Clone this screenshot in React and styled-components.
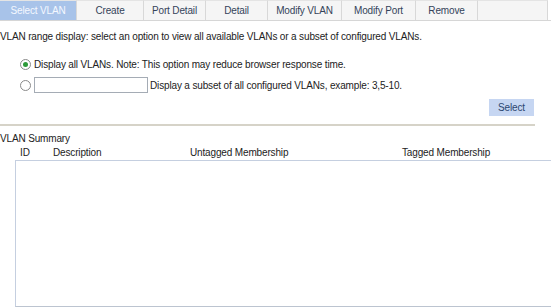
import React from 'react'
import styled, { createGlobalStyle } from 'styled-components';

const GlobalStyle = createGlobalStyle`
  html, body { margin: 0; padding: 0; background: #fff; }
  body {
    font-family: "Liberation Sans", Arial, sans-serif;
    font-size: 10px;
    letter-spacing: -0.15px;
    color: #333;
  }
`;

const tabs = [
  { label: 'Select VLAN', w: 77, active: true },
  { label: 'Create', w: 67 },
  { label: 'Port Detail', w: 62 },
  { label: 'Detail', w: 62 },
  { label: 'Modify VLAN', w: 74 },
  { label: 'Modify Port', w: 74 },
  { label: 'Remove', w: 62 },
  { label: '', w: 70 },
];

const App = () => {
  return (
    <Page>
      <GlobalStyle />
      <TabBar>
        {tabs.map((t, i) => (
          <Tab key={i} $w={t.w} $active={t.active}>{t.label}</Tab>
        ))}
      </TabBar>
      <Intro>VLAN range display: select an option to view all available VLANs or a subset of configured VLANs.</Intro>
      <Options>
        <OptionRow>
          <Radio $checked />
          <span>Display all VLANs. Note: This option may reduce browser response time.</span>
        </OptionRow>
        <OptionRow>
          <Radio />
          <RangeInput />
          <span>Display a subset of all configured VLANs, example: 3,5-10.</span>
        </OptionRow>
      </Options>
      <ButtonRow>
        <SelectButton>Select</SelectButton>
      </ButtonRow>
      <Divider />
      <SummaryTitle>VLAN Summary</SummaryTitle>
      <HeaderRow>
        <Col $w={33}>ID</Col>
        <Col $w={137}>Description</Col>
        <Col $w={212}>Untagged Membership</Col>
        <Col>Tagged Membership</Col>
      </HeaderRow>
      <SummaryBox />
    </Page>
  );
};

export default App;

const Page = styled.div`
  width: 551px;
  height: 308px;
  overflow: hidden;
`

const TabBar = styled.div`
  display: flex;
  height: 20px;
  border-bottom: 1px solid #d6d6d6;
`

const Tab = styled.div`
  width: ${p => p.$w}px;
  flex-shrink: 0;
  box-sizing: border-box;
  display: flex;
  align-items: center;
  justify-content: center;
  font-size: 10px;
  color: ${p => p.$active ? '#f4f8ff' : '#34435a'};
  background: ${p => p.$active ? '#a8c3e9' : '#f5f5f5'};
  border-right: 1px solid #d8d8d8;
  border-top: 1px solid #e4e4e4;
`

const Intro = styled.div`
  margin-top: 9px;
  line-height: 13px;
  color: #222;
`

const Options = styled.div`
  margin-top: 15px;
  padding-left: 20px;
  display: flex;
  flex-direction: column;
  gap: 6px;
`

const OptionRow = styled.div`
  display: flex;
  align-items: center;
  height: 13px;
  gap: 3px;
  color: #222;
  &:last-child { height: 16px; }
`

const Radio = styled.span`
  width: 9px;
  height: 9px;
  border-radius: 50%;
  border: 1px solid #8a8a8a;
  background: #fff;
  position: relative;
  flex-shrink: 0;
  &::after {
    content: "";
    display: ${p => p.$checked ? 'block' : 'none'};
    position: absolute;
    left: 2px;
    top: 2px;
    width: 5px;
    height: 5px;
    border-radius: 50%;
    background: #2e9a3a;
  }
`

const RangeInput = styled.span`
  width: 114px;
  height: 16px;
  box-sizing: border-box;
  border: 1px solid #a5acb5;
  background: #fff;
  margin-right: -1px;
`

const ButtonRow = styled.div`
  display: flex;
  justify-content: flex-end;
  padding-right: 17px;
  margin-top: 6px;
`

const SelectButton = styled.div`
  width: 45px;
  height: 17px;
  display: flex;
  align-items: center;
  justify-content: center;
  background: #c6d6f2;
  color: #2c4670;
  font-size: 10px;
`

const Divider = styled.div`
  width: 535px;
  height: 2px;
  background: #d6d3c8;
  margin-top: 8px;
`

const SummaryTitle = styled.div`
  margin-top: 6px;
  line-height: 13px;
  color: #222;
`

const HeaderRow = styled.div`
  display: flex;
  padding-left: 20px;
  line-height: 13px;
  margin-top: 1px;
  color: #222;
`

const Col = styled.div`
  width: ${p => p.$w ? `${p.$w}px` : 'auto'};
  flex-shrink: 0;
`

const SummaryBox = styled.div`
  margin-left: 15px;
  margin-top: 1px;
  height: 145px;
  border: 1px solid #c5cfe0;
  border-bottom-color: #bcc4d0;
  border-right: none;
  background: #fff;
`
